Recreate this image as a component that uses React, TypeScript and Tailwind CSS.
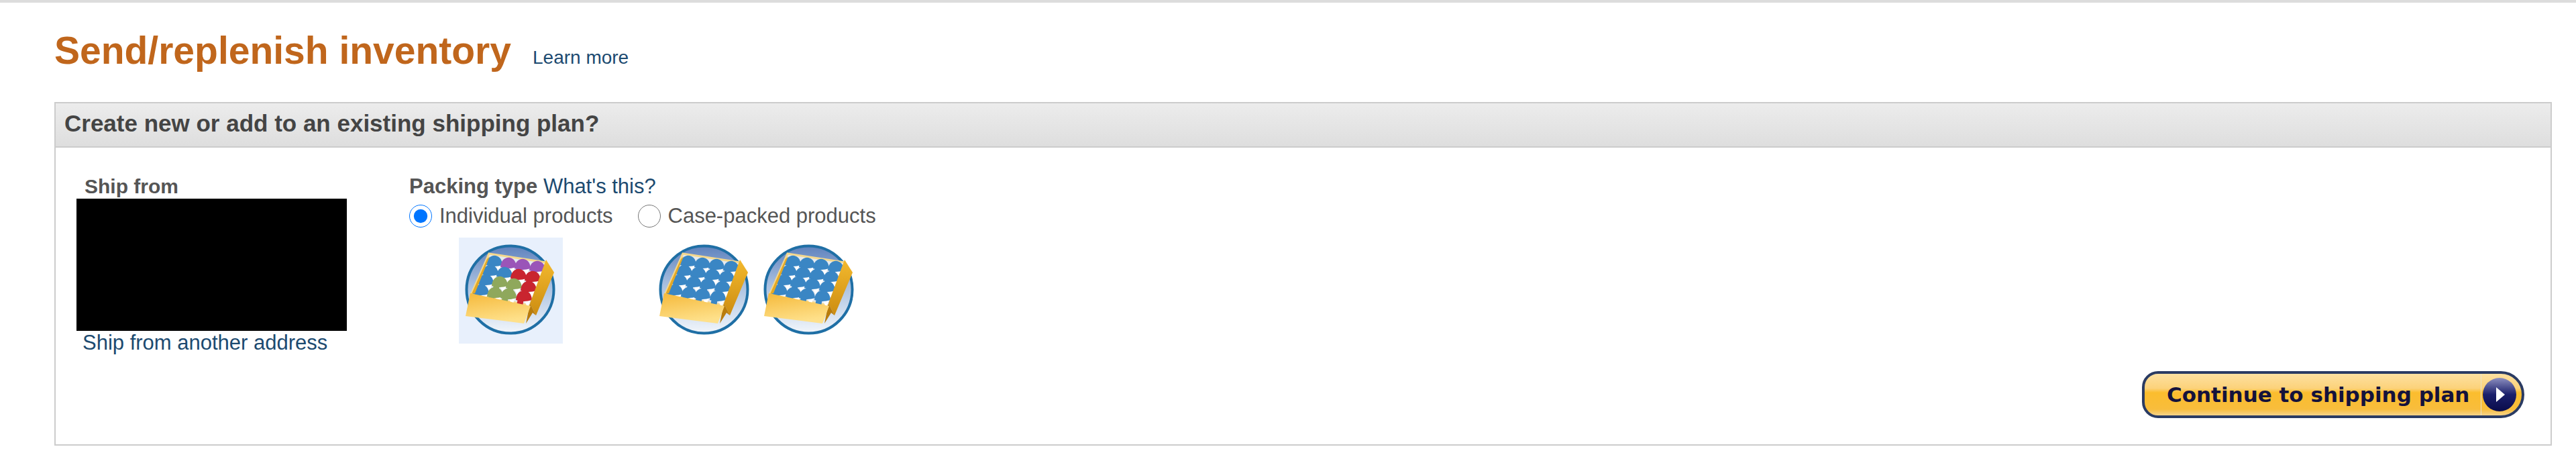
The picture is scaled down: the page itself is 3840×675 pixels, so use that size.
import React from "react";

const BLUE = "#3a86c4";
const PURPLE = "#9a55b8";
const RED = "#c9252f";
const GREEN = "#8fa85c";

const tilePositions = [
  [44, 25], [65, 28], [86, 30], [108, 33],
  [38, 39], [59, 42], [80, 45], [101, 48],
  [31, 53], [52, 56], [73, 59], [95, 63],
  [24, 68], [45, 72], [65, 74], [88, 77],
];

const mixedTiles = [
  BLUE, PURPLE, PURPLE, PURPLE,
  BLUE, BLUE, RED, RED,
  BLUE, GREEN, GREEN, RED,
  BLUE, GREEN, GREEN, RED,
];

// Open carton with rows of units inside a round badge
function PackIcon({ colors }: { colors: string[] }) {
  const id = React.useId();
  return (
    <svg viewBox="0 0 135 137" className="w-[135px] h-[137px] block">
      <defs>
        <linearGradient id={id + "disc"} x1="0" y1="0" x2="0" y2="1">
          <stop offset="0" stopColor="#5f82bd" />
          <stop offset="0.45" stopColor="#a9c0e0" />
          <stop offset="1" stopColor="#f2f6fb" />
        </linearGradient>
        <linearGradient id={id + "front"} x1="0" y1="0" x2="0.3" y2="1">
          <stop offset="0" stopColor="#f5b93a" />
          <stop offset="1" stopColor="#fee08a" />
        </linearGradient>
        <linearGradient id={id + "side"} x1="0" y1="0" x2="0" y2="1">
          <stop offset="0" stopColor="#f3b92e" />
          <stop offset="1" stopColor="#cc8c10" />
        </linearGradient>
      </defs>
      <circle cx="67.5" cy="68.5" r="65" fill={`url(#${id}disc)`} stroke="#1f6fa5" strokeWidth="4" />
      <polygon points="36,15 121,28 98,92 9,76" fill="#e3e9f0" stroke="#f4d88e" strokeWidth="3" />
      {tilePositions.map(([x, y], i) => (
        <g key={i}>
          <path d={`M${x - 1} ${y + 5} L${x + 10} ${y + 5} L${x + 6} ${y + 19} Z`} fill="#ffffff" />
          <path d={`M${x - 9} ${y + 5} L${x} ${y + 5} L${x - 2} ${y + 16} L${x - 11} ${y + 15} Z`} fill={colors[i]} />
          <path
            d={`M${x - 12} ${y + 7} C${x - 11} ${y - 12} ${x + 11} ${y - 12} ${x + 12} ${y + 7} Q${x} ${y + 11} ${x - 12} ${y + 7} Z`}
            fill={colors[i]}
          />
        </g>
      ))}
      <polygon points="33,23 10,75 15,74 37,19" fill="#e4a824" />
      <polygon points="121,24 133,43 106,107 97,89" fill={`url(#${id}side)`} />
      <polygon points="97,89 106,107 101,103 91,119" fill="#b97c0c" />
      <polygon points="8,74 98,93 88,119 1,108" fill={`url(#${id}front)`} />
    </svg>
  );
}

function PlayDisc() {
  return (
    <svg viewBox="0 0 50 50" className="w-[50px] h-[50px] block">
      <defs>
        <linearGradient id="playDisc" x1="0" y1="0" x2="0" y2="1">
          <stop offset="0" stopColor="#8d8fc0" />
          <stop offset="0.5" stopColor="#1a1f6b" />
          <stop offset="1" stopColor="#0a0c4a" />
        </linearGradient>
      </defs>
      <circle cx="25" cy="25" r="25" fill="url(#playDisc)" />
      <polygon points="20,14 33,25 20,36" fill="#ffffff" />
    </svg>
  );
}

export default function App() {
  return (
    <div className="h-[675px] overflow-hidden bg-white border-t-[4px] border-[#dcdcdc] font-['Liberation_Sans',Arial,sans-serif] antialiased">
      {/* Page title */}
      <div className="flex items-baseline pl-[81px] pt-[41px] h-[148px]">
        <h1 className="text-[57px] leading-[60px] font-bold text-[#c0661c]">Send/replenish inventory</h1>
        <a className="ml-[32px] text-[28px] text-[#1c4a70]">Learn more</a>
      </div>

      {/* Shipping plan panel */}
      <div className="ml-[81px] mr-[36px] h-[512px] border-2 border-[#cccccc] flex flex-col">
        <div className="h-[66px] shrink-0 pl-[13px] pb-[3px] flex items-center border-b-2 border-[#cccccc] bg-gradient-to-b from-[#ececec] to-[#dedede]">
          <span className="text-[35px] font-bold text-[#444444]">Create new or add to an existing shipping plan?</span>
        </div>

        <div className="flex-1 flex flex-col justify-between pl-[31px] pr-[39px] pb-[39px]">
          <div className="flex pt-[40px]">
            {/* Ship from */}
            <div className="w-[403px] shrink-0">
              <div className="pl-[12px] h-[36px] text-[30px] leading-[36px] font-bold text-[#555555]">Ship from</div>
              <div className="h-[197px] bg-black" />
              <a className="block pl-[9px] text-[31px] leading-[36px] text-[#1c4a70]">Ship from another address</a>
            </div>

            {/* Packing type */}
            <div className="ml-[93px]">
              <div className="h-[36px] leading-[36px] text-[31px] text-[#555555]">
                <span className="font-bold">Packing type</span> <a className="text-[#1c4a70]">What's this?</a>
              </div>
              <div className="flex items-center h-[38px] mt-[7px] text-[31px] text-[#555555]">
                <label className="flex items-center">
                  <input type="radio" name="packing" defaultChecked className="w-[34px] h-[34px] m-0 accent-[#0075ff]" />
                  <span className="ml-[11px]">Individual products</span>
                </label>
                <label className="flex items-center ml-[37px]">
                  <input type="radio" name="packing" className="w-[34px] h-[34px] m-0" />
                  <span className="ml-[11px]">Case-packed products</span>
                </label>
              </div>
              <div className="flex mt-[13px]">
                <div className="ml-[74px] w-[155px] h-[158px] pl-[9px] pt-[9px] bg-[#e8f0fc]">
                  <PackIcon colors={mixedTiles} />
                </div>
                <div className="ml-[143px] pt-[9px] flex gap-[21px]">
                  <PackIcon colors={Array(16).fill(BLUE)} />
                  <PackIcon colors={Array(16).fill(BLUE)} />
                </div>
              </div>
            </div>
          </div>

          {/* Continue button */}
          <div className="flex justify-end">
            <button className="w-[570px] h-[70px] flex rounded-l-[24px] rounded-r-[35px] border-[4px] border-[#2a3b63] overflow-hidden bg-[linear-gradient(to_bottom,#fde0a0_0%,#fcd27a_35%,#fbbd2e_45%,#f8bd3c_85%,#f6d48a_100%)]">
              <span className="flex-1 h-full flex items-center pl-[33px] font-['DejaVu_Sans',sans-serif] font-bold text-[31px] text-[#14123c]">
                Continue to shipping plan
              </span>
              <span className="w-[61px] h-full flex items-center pl-[2px] border-l border-[#e8e2cc]">
                <PlayDisc />
              </span>
            </button>
          </div>
        </div>
      </div>
    </div>
  );
}
